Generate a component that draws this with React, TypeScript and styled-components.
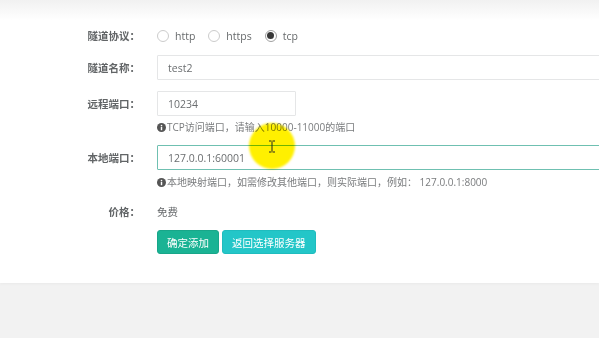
import React from 'react'
import styled, {createGlobalStyle} from 'styled-components'

const GlobalStyle = createGlobalStyle`
  html, body {
    margin: 0;
    padding: 0;
    background: #f2f2f2;
    font-family: "Open Sans", "Noto Sans CJK SC", sans-serif;
    color: #676a6c;
    overflow: hidden;
  }
`

const Page = styled.div`
  position: relative;
  width: 599px;
  height: 338px;
  overflow: hidden;
  background: #f2f2f2;
`

const Panel = styled.section`
  height: 283px;
  box-sizing: border-box;
  padding-top: 23px;
  background: linear-gradient(to bottom, #f1f1f1 0, #ffffff 20px);
  box-shadow: 0 1px 3px rgba(0, 0, 0, 0.04);
  overflow: hidden;
`

const Form = styled.form`
  display: flex;
  flex-direction: column;
  width: 720px;
`

const Group = styled.div<{ $space?: number }>`
  display: flex;
  flex-direction: column;
  margin-top: ${p => p.$space ?? 0}px;
`

const Row = styled.div`
  display: flex;
  align-items: center;
  min-height: 25px;
`

const Label = styled.label`
  width: 140px;
  flex-shrink: 0;
  text-align: right;
  font-size: 10.5px;
  font-weight: 700;
  color: #626567;
  margin-right: 17px;
`

const Field = styled.div`
  flex: 1;
  display: flex;
  align-items: center;
`

const Input = styled.input<{ $width?: number; $focus?: boolean }>`
  box-sizing: border-box;
  height: 25px;
  width: ${p => (p.$width ? `${p.$width}px` : '100%')};
  padding: 0 10px;
  border: 1px solid ${p => (p.$focus ? '#6fc0b1' : '#e5e6e7')};
  border-radius: 1px;
  background: #fff;
  font-family: "Open Sans", "Noto Sans CJK SC", sans-serif;
  font-size: 10.5px;
  color: #6b6e70;
  outline: none;
`

const RadioGroup = styled.div`
  display: flex;
  align-items: center;
  gap: 13px;
`

const RadioItem = styled.span`
  display: flex;
  align-items: center;
  gap: 6px;
  font-size: 10.5px;
  color: #676a6c;
`

const RadioCircle = styled.span<{ $checked?: boolean }>`
  box-sizing: border-box;
  width: 12px;
  height: 12px;
  border-radius: 50%;
  border: 1px solid ${p => (p.$checked ? '#a0a0a0' : '#cccccc')};
  background: #fff;
  display: flex;
  align-items: center;
  justify-content: center;

  &::after {
    content: '';
    width: 7px;
    height: 7px;
    border-radius: 50%;
    background: ${p => (p.$checked ? '#383838' : 'transparent')};
  }
`

const Help = styled.div<{ $space: number }>`
  margin-top: ${p => p.$space}px;
  margin-left: 157px;
  display: flex;
  align-items: center;
  font-size: 10px;
  line-height: 14px;
  color: #7a7c7e;
  white-space: nowrap;

  & > svg {
    margin-right: 1px;
  }
`

const Plain = styled.span`
  font-size: 10.5px;
  color: #676a6c;
`

const Actions = styled.div`
  display: flex;
  gap: 3px;
  margin-left: 157px;
  margin-top: 6px;
`

const Button = styled.button<{ $variant: 'primary' | 'info' }>`
  height: 24px;
  padding: 0 9px;
  border: 1px solid ${p => (p.$variant === 'primary' ? '#18a689' : '#1fbcbe')};
  border-radius: 3px;
  background: ${p => (p.$variant === 'primary' ? '#1ab394' : '#23c6c8')};
  color: #fff;
  font-family: "Open Sans", "Noto Sans CJK SC", sans-serif;
  font-size: 10.5px;
  cursor: pointer;
`

const Highlight = styled.div`
  position: absolute;
  left: 249px;
  top: 123px;
  width: 46px;
  height: 46px;
  border-radius: 50%;
  background: #fff000;
  mix-blend-mode: multiply;
  filter: blur(0.8px);
  pointer-events: none;
`

const Cursor = styled.svg`
  position: absolute;
  left: 268px;
  top: 140px;
  pointer-events: none;
`

const InfoIcon = () => (
  <svg width="9" height="9" viewBox="0 0 10 10">
    <circle cx="5" cy="5" r="5" fill="#555"/>
    <rect x="4.2" y="4.2" width="1.6" height="3.8" fill="#fff"/>
    <circle cx="5" cy="2.8" r="0.9" fill="#fff"/>
  </svg>
)

const protocols = [
  {name: 'http', checked: false},
  {name: 'https', checked: false},
  {name: 'tcp', checked: true},
]

const App = () => {
  return (
    <Page>
      <GlobalStyle/>
      <Panel>
        <Form>
          <Group>
            <Row>
              <Label>隧道协议：</Label>
              <Field>
                <RadioGroup>
                  {protocols.map(p => (
                    <RadioItem key={p.name}>
                      <RadioCircle $checked={p.checked}/>
                      {p.name}
                    </RadioItem>
                  ))}
                </RadioGroup>
              </Field>
            </Row>
          </Group>
          <Group $space={7}>
            <Row>
              <Label>隧道名称：</Label>
              <Field>
                <Input defaultValue="test2"/>
              </Field>
            </Row>
          </Group>
          <Group $space={11}>
            <Row>
              <Label>远程端口：</Label>
              <Field>
                <Input $width={139} defaultValue="10234"/>
              </Field>
            </Row>
            <Help $space={4}>
              <InfoIcon/>TCP访问端口，请输入10000-11000的端口
            </Help>
          </Group>
          <Group $space={11}>
            <Row>
              <Label>本地端口：</Label>
              <Field>
                <Input $focus defaultValue="127.0.0.1:60001"/>
              </Field>
            </Row>
            <Help $space={5}>
              <InfoIcon/>本地映射端口，如需修改其他端口，则实际端口，例如： 127.0.0.1:8000
            </Help>
          </Group>
          <Group $space={10}>
            <Row>
              <Label>价格：</Label>
              <Field>
                <Plain>免费</Plain>
              </Field>
            </Row>
          </Group>
          <Actions>
            <Button type="button" $variant="primary">确定添加</Button>
            <Button type="button" $variant="info">返回选择服务器</Button>
          </Actions>
        </Form>
      </Panel>
      <Highlight/>
      <Cursor width="8" height="13" viewBox="0 0 8 13">
        <path d="M1 1h2.5M4.5 1H7M4 1.5v10M1 12h2.5M4.5 12H7" stroke="#222" strokeWidth="1" fill="none"/>
      </Cursor>
    </Page>
  )
}

export default App
